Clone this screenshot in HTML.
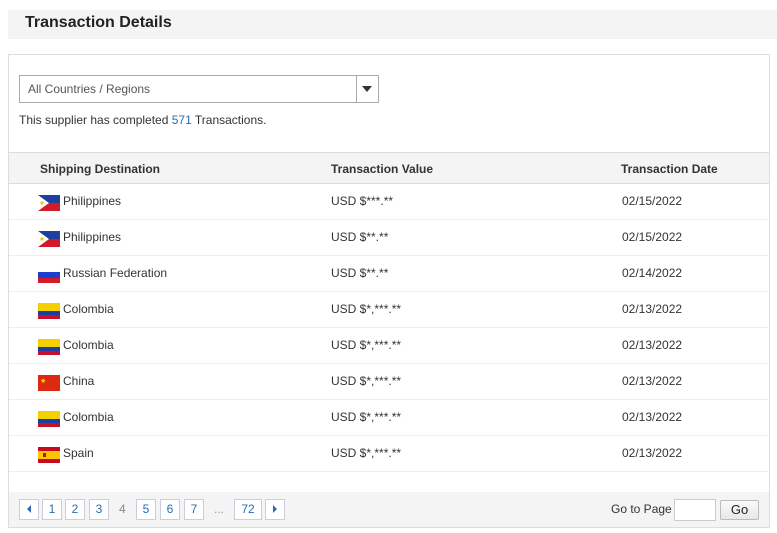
<!DOCTYPE html>
<html><head><style>
*{margin:0;padding:0;box-sizing:border-box}
body{width:777px;height:533px;background:#fff;font-family:"Liberation Sans",Arial,sans-serif;font-size:12px;color:#333;position:relative;overflow:hidden}
.abs{position:absolute}
.hdr{left:8px;top:10px;width:769px;height:29px;background:#f4f4f4}
.hdr b{position:absolute;left:17px;top:4px;font-size:16px;color:#222}
.panel{left:8px;top:54px;width:762px;height:474px;border:1px solid #ddd}
.sel{left:19px;top:75px;width:360px;height:28px;border:1px solid #aaa;background:#fff}
.sel span{position:absolute;left:8px;top:6px;color:#555}
.sel i{position:absolute;right:0;top:0;width:22px;height:26px;border-left:1px solid #aaa}
.sel i:after{content:"";position:absolute;left:5px;top:10px;border-left:5px solid transparent;border-right:5px solid transparent;border-top:6px solid #333}
.th{left:9px;top:152px;width:760px;height:32px;background:#f4f4f4;border-top:1px solid #ddd;border-bottom:1px solid #ddd;font-weight:bold;color:#333}
.th span{position:absolute;top:9px}
.row{left:9px;width:760px;height:36px;border-bottom:1px solid #eee}
.row span{position:absolute;top:10px}
.flag{position:absolute;left:29px;top:11px;width:22px;height:16px;overflow:hidden}
.pg{left:9px;top:492px;width:760px;height:35px;background:#f4f4f4}
.b{position:absolute;top:7px;height:21px;border:1px solid #ccd;background:#fff;color:#2a6eb0;text-align:center;line-height:19px;font-size:12px}
</style></head><body>
<div class="abs hdr"><b>Transaction Details</b></div>
<div class="abs panel"></div>
<div class="abs sel"><span>All Countries / Regions</span><i></i></div>
<div class="abs" style="left:19px;top:113px">This supplier has completed <span style="color:#2a6eb0">571</span> Transactions.</div>
<div class="abs th"><span style="left:31px">Shipping Destination</span><span style="left:322px">Transaction Value</span><span style="left:612px">Transaction Date</span></div>

<div class="abs row" style="top:184px"><div class="flag"><svg width="22" height="16"><rect width="22" height="8" fill="#1c3fa0"/><rect y="8" width="22" height="8" fill="#d21a2a"/><polygon points="0,0 11,8 0,16" fill="#fff"/><circle cx="4" cy="8" r="1.6" fill="#f5c400"/></svg></div><span style="left:54px">Philippines</span><span style="left:322px">USD $***.**</span><span style="left:613px">02/15/2022</span></div>
<div class="abs row" style="top:220px"><div class="flag"><svg width="22" height="16"><rect width="22" height="8" fill="#1c3fa0"/><rect y="8" width="22" height="8" fill="#d21a2a"/><polygon points="0,0 11,8 0,16" fill="#fff"/><circle cx="4" cy="8" r="1.6" fill="#f5c400"/></svg></div><span style="left:54px">Philippines</span><span style="left:322px">USD $**.**</span><span style="left:613px">02/15/2022</span></div>
<div class="abs row" style="top:256px"><div class="flag"><svg width="22" height="16"><rect width="22" height="6" fill="#fff"/><rect y="5" width="22" height="6" fill="#1c3fcf"/><rect y="11" width="22" height="5" fill="#d21a2a"/></svg></div><span style="left:54px">Russian Federation</span><span style="left:322px">USD $**.**</span><span style="left:613px">02/14/2022</span></div>
<div class="abs row" style="top:292px"><div class="flag"><svg width="22" height="16"><rect width="22" height="8" fill="#f5d000"/><rect y="8" width="22" height="4" fill="#1c3f9f"/><rect y="12" width="22" height="4" fill="#c8102e"/></svg></div><span style="left:54px">Colombia</span><span style="left:322px">USD $*,***.**</span><span style="left:613px">02/13/2022</span></div>
<div class="abs row" style="top:328px"><div class="flag"><svg width="22" height="16"><rect width="22" height="8" fill="#f5d000"/><rect y="8" width="22" height="4" fill="#1c3f9f"/><rect y="12" width="22" height="4" fill="#c8102e"/></svg></div><span style="left:54px">Colombia</span><span style="left:322px">USD $*,***.**</span><span style="left:613px">02/13/2022</span></div>
<div class="abs row" style="top:364px"><div class="flag"><svg width="22" height="16"><rect width="22" height="16" fill="#de2910"/><text x="2" y="8" font-size="7" fill="#ffde00">★</text></svg></div><span style="left:54px">China</span><span style="left:322px">USD $*,***.**</span><span style="left:613px">02/13/2022</span></div>
<div class="abs row" style="top:400px"><div class="flag"><svg width="22" height="16"><rect width="22" height="8" fill="#f5d000"/><rect y="8" width="22" height="4" fill="#1c3f9f"/><rect y="12" width="22" height="4" fill="#c8102e"/></svg></div><span style="left:54px">Colombia</span><span style="left:322px">USD $*,***.**</span><span style="left:613px">02/13/2022</span></div>
<div class="abs row" style="top:436px"><div class="flag"><svg width="22" height="16"><rect width="22" height="16" fill="#c60b1e"/><rect y="4" width="22" height="8" fill="#ffc400"/><rect x="5" y="6" width="3" height="4" fill="#ad1519"/></svg></div><span style="left:54px">Spain</span><span style="left:322px">USD $*,***.**</span><span style="left:613px">02/13/2022</span></div>

<div class="abs pg">
<div class="b" style="left:10px;width:20px"><svg width="8" height="10" style="margin-top:4px"><polygon points="6,1 2,5 6,9" fill="#2a6eb0"/></svg></div>
<div class="b" style="left:33px;width:20px">1</div>
<div class="b" style="left:56px;width:20px">2</div>
<div class="b" style="left:80px;width:20px">3</div>
<div class="abs" style="left:110px;top:10px;color:#888">4</div>
<div class="b" style="left:127px;width:20px">5</div>
<div class="b" style="left:151px;width:20px">6</div>
<div class="b" style="left:175px;width:20px">7</div>
<div class="abs" style="left:205px;top:10px;color:#999">...</div>
<div class="b" style="left:225px;width:28px">72</div>
<div class="b" style="left:256px;width:20px"><svg width="8" height="10" style="margin-top:4px"><polygon points="2,1 6,5 2,9" fill="#2a6eb0"/></svg></div>
<div class="abs" style="left:602px;top:10px;color:#333">Go to Page</div>
<div class="abs" style="left:665px;top:7px;width:42px;height:22px;border:1px solid #ccc;background:#fff"></div>
<div class="abs" style="left:711px;top:8px;width:39px;height:20px;border:1px solid #bbb;border-radius:2px;background:linear-gradient(#fafafa,#e8e8e8);text-align:center;line-height:18px;font-size:13px;color:#222">Go</div>
</div>
</body></html>
